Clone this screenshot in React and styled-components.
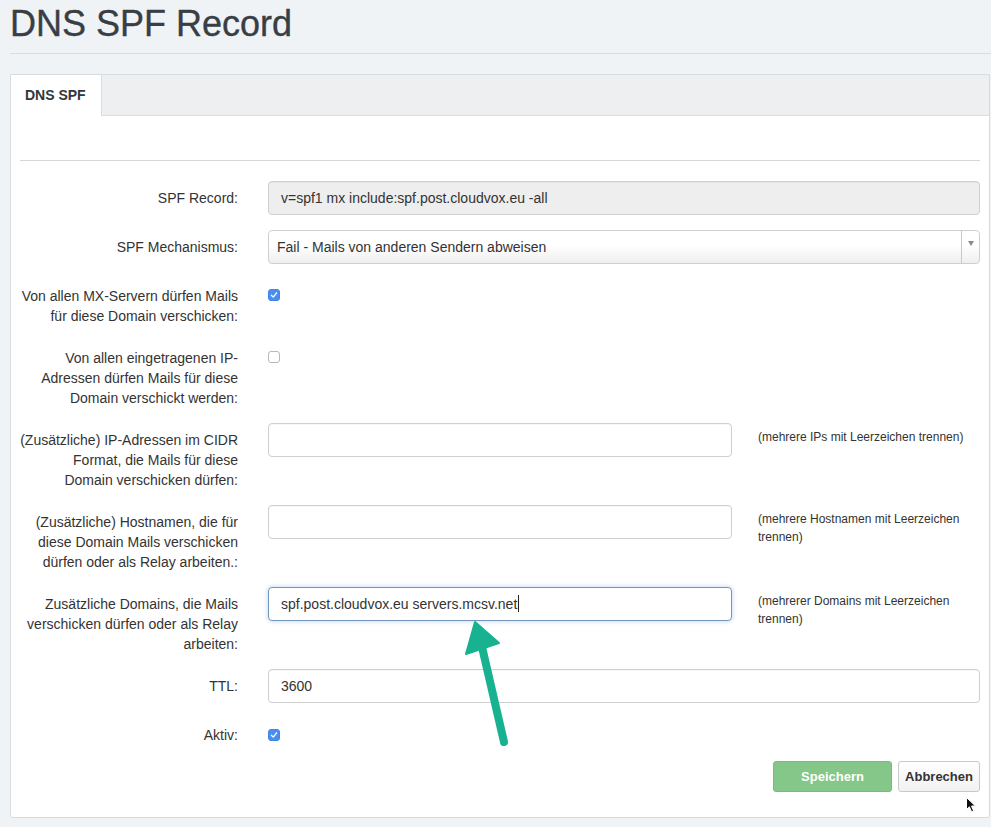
import styled, { createGlobalStyle } from 'styled-components'

const GlobalStyle = createGlobalStyle`
  html, body {
    margin: 0;
    background: #eff3f6;
    font-family: "Liberation Sans", Arial, sans-serif;
    color: #333;
  }
  * { box-sizing: border-box; }
`

const Page = styled.div`
  position: relative;
  padding: 0 1px 10px 10px;
`

const Title = styled.h1`
  margin: 0 -1px 0 0;
  padding: 4px 0 9px;
  font-size: 36px;
  line-height: 40px;
  font-weight: normal;
  color: #393e44;
  -webkit-text-stroke: 0.35px #393e44;
  border-bottom: 1px solid #d9dde1;
`

const Panel = styled.div`
  margin-top: 20px;
  background: #fff;
  border: 1px solid #d8dcdf;
  border-radius: 0 0 3px 3px;
`

const TabBar = styled.div`
  display: flex;
  height: 41px;
  background: #eeeff0;
  border-bottom: 1px solid #dcdde0;
`

const Tab = styled.div`
  height: 41px;
  padding: 0 15px 0 14px;
  background: #fff;
  border-right: 1px solid #dcdde0;
  font-size: 14px;
  font-weight: bold;
  line-height: 41px;
  color: #33373b;
`

const Body = styled.div`
  padding: 44px 9px 25px;
`

const Divider = styled.hr`
  margin: 0 0 20px;
  border: 0;
  border-top: 1px solid #d5d7d9;
`

const Row = styled.div`
  display: grid;
  grid-template-columns: 218px 1fr;
  column-gap: 30px;
  margin-bottom: 15px;
`

const Label = styled.label`
  padding-top: 7px;
  text-align: right;
  font-size: 14px;
  line-height: 20px;
  color: #333;
  white-space: nowrap;
`

const Split = styled.div`
  display: grid;
  grid-template-columns: 464px 1fr;
  column-gap: 26px;
`

const Help = styled.div`
  padding-top: 5px;
  font-size: 12px;
  line-height: 18px;
  color: #333;
`

const Input = styled.div`
  height: 34px;
  padding: 0 12px;
  border: 1px solid ${({ $focus }) => ($focus ? '#7496bd' : '#cfcfcf')};
  border-radius: 4px;
  background: ${({ $readOnly }) => ($readOnly ? '#eeeeee' : '#fff')};
  box-shadow: ${({ $focus }) =>
    $focus ? '0 0 5px rgba(102, 150, 210, 0.45)' : 'inset 0 1px 1px rgba(0,0,0,.03)'};
  font-size: 14px;
  line-height: 32px;
  color: #333;
  white-space: nowrap;
`

const Caret = styled.span`
  display: inline-block;
  width: 1px;
  height: 17px;
  margin-left: 1px;
  vertical-align: -3px;
  background: #222;
`

const Select = styled.div`
  display: flex;
  height: 34px;
  border: 1px solid #cfcfcf;
  border-radius: 4px;
  background: linear-gradient(#fff 0%, #fff 45%, #efefef 100%);
  font-size: 14px;
  line-height: 32px;
  color: #333;
`

const SelectText = styled.div`
  flex: 1;
  padding: 0 8px;
`

const SelectArrow = styled.div`
  width: 18px;
  border-left: 1px solid #c8c8c8;
  display: flex;
  justify-content: center;
  padding-top: 10px;

  &::after {
    content: '';
    width: 0;
    height: 0;
    border-left: 3px solid transparent;
    border-right: 3px solid transparent;
    border-top: 5px solid #8a8a8a;
  }
`

const Check = styled.span`
  display: block;
  width: 12px;
  height: 12px;
  margin-top: ${({ $top }) => $top || 10}px;
  border-radius: 3px;
  background: ${({ $on }) => ($on ? '#4a8ff0' : '#fff')};
  border: ${({ $on }) => ($on ? '1px solid #3f84e6' : '1px solid #b8b8b8')};
  position: relative;

  svg {
    position: absolute;
    left: 0;
    top: 0;
  }
`

const Actions = styled.div`
  display: flex;
  justify-content: flex-end;
  gap: 6px;
  margin-top: 16px;
`

const Button = styled.button`
  width: ${({ $w }) => $w}px;
  height: 31px;
  padding: 0;
  border-radius: 3px;
  font-family: "Liberation Sans", Arial, sans-serif;
  font-size: 13px;
  font-weight: bold;
  cursor: pointer;
  color: ${({ $primary }) => ($primary ? '#fff' : '#333')};
  border: 1px solid ${({ $primary }) => ($primary ? '#78bc7c' : '#c9c9c9')};
  background: ${({ $primary }) =>
    $primary ? '#84c788' : 'linear-gradient(#fff, #f1f1f1)'};
`

const Overlay = styled.svg`
  position: absolute;
  left: ${({ $x }) => $x}px;
  top: ${({ $y }) => $y}px;
  pointer-events: none;
  overflow: visible;
`

function Tick() {
  return (
    <svg width="10" height="10" viewBox="0 0 10 10">
      <path d="M2.4 5.2 L4.3 7.1 L7.6 2.8" fill="none" stroke="#fff" strokeWidth="1.3" strokeLinecap="round" strokeLinejoin="round" />
    </svg>
  )
}

function Checkbox({ on, top }) {
  return <Check $on={on} $top={top}>{on && <Tick />}</Check>
}

function Lines({ children }) {
  return (
    <Label>
      {children.map((line, i) => (
        <span key={i}>
          {i > 0 && <br />}
          {line}
        </span>
      ))}
    </Label>
  )
}

export default function App() {
  return (
    <Page>
      <GlobalStyle />
      <Title>DNS SPF Record</Title>
      <Panel>
        <TabBar>
          <Tab>DNS SPF</Tab>
        </TabBar>
        <Body>
          <Divider />

          <Row>
            <Label>SPF Record:</Label>
            <Input $readOnly>v=spf1 mx include:spf.post.cloudvox.eu -all</Input>
          </Row>

          <Row>
            <Label>SPF Mechanismus:</Label>
            <Select>
              <SelectText>Fail - Mails von anderen Sendern abweisen</SelectText>
              <SelectArrow />
            </Select>
          </Row>

          <Row>
            <Lines>{['Von allen MX-Servern dürfen Mails', 'für diese Domain verschicken:']}</Lines>
            <div><Checkbox on /></div>
          </Row>

          <Row>
            <Lines>{['Von allen eingetragenen IP-', 'Adressen dürfen Mails für diese', 'Domain verschickt werden:']}</Lines>
            <div><Checkbox /></div>
          </Row>

          <Row>
            <Lines>{['(Zusätzliche) IP-Adressen im CIDR', 'Format, die Mails für diese', 'Domain verschicken dürfen:']}</Lines>
            <Split>
              <Input />
              <Help>(mehrere IPs mit Leerzeichen trennen)</Help>
            </Split>
          </Row>

          <Row>
            <Lines>{['(Zusätzliche) Hostnamen, die für', 'diese Domain Mails verschicken', 'dürfen oder als Relay arbeiten.:']}</Lines>
            <Split>
              <Input />
              <Help>(mehrere Hostnamen mit Leerzeichen trennen)</Help>
            </Split>
          </Row>

          <Row>
            <Lines>{['Zusätzliche Domains, die Mails', 'verschicken dürfen oder als Relay', 'arbeiten:']}</Lines>
            <Split>
              <Input $focus>spf.post.cloudvox.eu servers.mcsv.net<Caret /></Input>
              <Help>(mehrerer Domains mit Leerzeichen trennen)</Help>
            </Split>
          </Row>

          <Row>
            <Label>TTL:</Label>
            <Input>3600</Input>
          </Row>

          <Row>
            <Label>Aktiv:</Label>
            <div><Checkbox on top={11} /></div>
          </Row>

          <Actions>
            <Button $primary $w={119}>Speichern</Button>
            <Button $w={82}>Abbrechen</Button>
          </Actions>
        </Body>
      </Panel>

      <Overlay $x={460} $y={615} width="52" height="133" viewBox="0 0 52 133">
        <line x1="22" y1="32" x2="44" y2="127" stroke="#18b290" strokeWidth="8" strokeLinecap="round" />
        <polygon points="15,7 6,39 39,28" fill="#18b290" stroke="#18b290" strokeWidth="2" strokeLinejoin="round" />
      </Overlay>

      <Overlay $x={966} $y={797} width="11" height="16" viewBox="0 0 11 16">
        <path d="M0.5 0.5 L0.5 12.5 L3.4 9.8 L5.6 14.8 L7.6 13.9 L5.5 9 L9.4 9 Z" fill="#111" stroke="#fff" strokeWidth="1" />
      </Overlay>
    </Page>
  )
}
